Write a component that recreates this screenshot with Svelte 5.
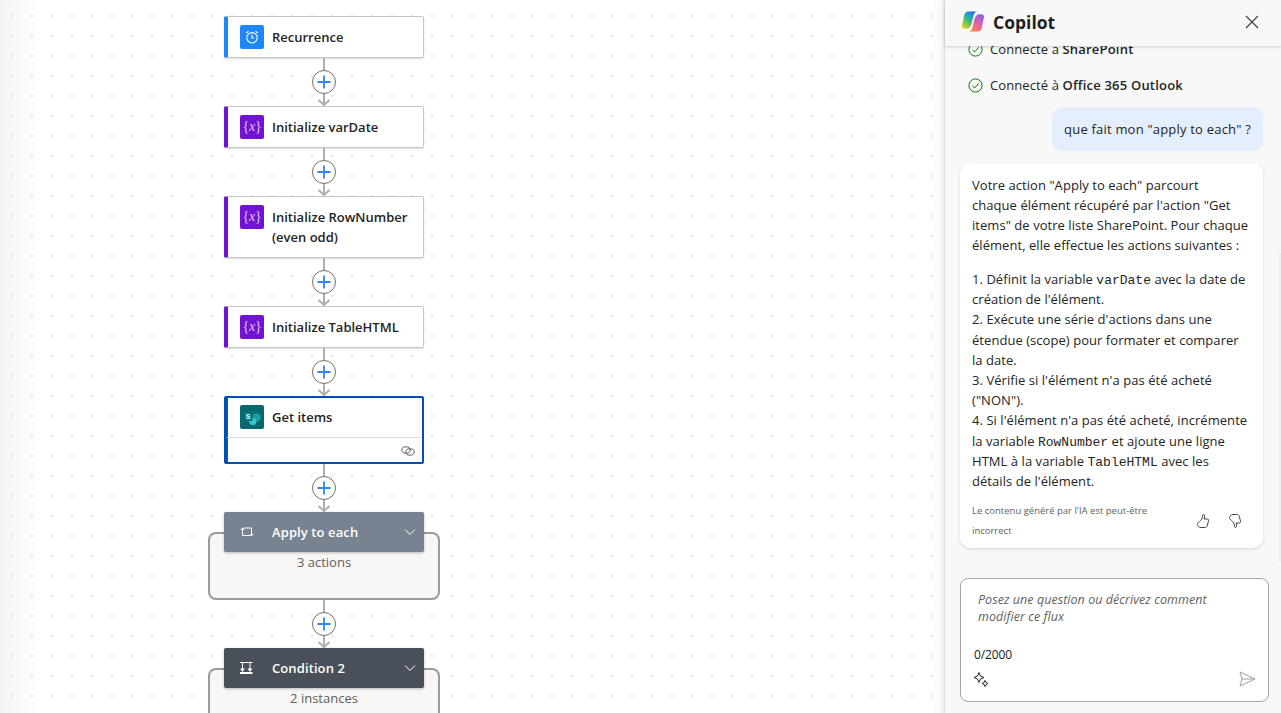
<script>
  const connector = true;
</script>

{#snippet plus()}
  <div class="conn">
    <svg class="conn-line" width="24" height="48" viewBox="0 0 24 48" aria-hidden="true">
      <path d="M12 0V47M6.500 42L12 47L17.500 42" fill="none" stroke="#b1afae" stroke-width="2"/>
    </svg>
    <span class="plus">
      <svg width="24" height="24" viewBox="0 0 24 24" aria-hidden="true">
        <circle cx="12" cy="12" r="11.500" fill="#fff" stroke="#6f6d6b"/>
        <path d="M12 5.500V18.500M5.500 12H18.500" stroke="#2f86f5" stroke-width="1.800"/>
      </svg>
    </span>
  </div>
{/snippet}

{#snippet varIcon()}
  <span class="tile purple"><span class="vx">&#123;<i>x</i>&#125;</span></span>
{/snippet}

<div class="app">
  <main class="canvas">
    <div class="flow">
      <div class="node blue">
        <span class="tile azure">
          <svg width="16" height="16" viewBox="0 0 16 16" fill="none" stroke="#fff" stroke-width="1.100">
            <circle cx="8" cy="8.800" r="5.200"/>
            <path d="M8 5.800V9H10.200M2.200 4.200L4.400 2.200M13.800 4.200L11.600 2.200" />
          </svg>
        </span>
        <span class="label">Recurrence</span>
      </div>
      {@render plus()}
      <div class="node violet">
        {@render varIcon()}
        <span class="label">Initialize varDate</span>
      </div>
      {@render plus()}
      <div class="node violet tall">
        {@render varIcon()}
        <span class="label">Initialize RowNumber<br />(even odd)</span>
      </div>
      {@render plus()}
      <div class="node violet">
        {@render varIcon()}
        <span class="label">Initialize TableHTML</span>
      </div>
      {@render plus()}
      <div class="node selected">
        <div class="head">
          <span class="tile teal">
            <svg width="20" height="20" viewBox="0 0 20 20">
              <circle cx="10.500" cy="6.500" r="5" fill="#036c70"/>
              <circle cx="14.500" cy="10.500" r="4.300" fill="#1a9ba1"/>
              <circle cx="10.800" cy="14.500" r="3.600" fill="#37c6d0"/>
              <rect x="2" y="5.500" width="8.500" height="8.500" rx="1" fill="#03787c"/>
              <text x="6.200" y="12.400" class="s">S</text>
            </svg>
          </span>
          <span class="label">Get items</span>
        </div>
        <div class="foot">
          <svg width="14" height="12" viewBox="0 0 14 12" fill="none" stroke="#605e5c" stroke-width="1">
            <ellipse cx="5" cy="5" rx="4.200" ry="3.200"/>
            <ellipse cx="9" cy="7" rx="4.200" ry="3.200"/>
          </svg>
        </div>
      </div>
      {@render plus()}
      <div class="group">
        <div class="ghead slate">
          <svg width="14" height="14" viewBox="0 0 14 14" fill="none" stroke="#fff" stroke-width="1">
            <path d="M3.500 3H11.500V10M10 10.500H2.500V3.500M1 5L2.500 3L4 5M10 9L11.500 11L13 9" />
          </svg>
          <span class="gtitle">Apply to each</span>
          <svg class="chev" width="12" height="8" viewBox="0 0 12 8" fill="none" stroke="#fff" stroke-width="1"><path d="M1 1.500L6 6.500L11 1.500"/></svg>
        </div>
        <div class="gbox"><span>3 actions</span></div>
      </div>
      {@render plus()}
      <div class="group">
        <div class="ghead dark">
          <svg width="14" height="14" viewBox="0 0 14 14" fill="none" stroke="#fff" stroke-width="1">
            <path d="M0 1.500H12.500M2.500 1.500V8M10 1.500V8" />
            <path d="M0 7.500H5L2.500 11ZM7.500 7.500H12.500L10 11Z" fill="#fff" stroke="none"/>
            <path d="M0 12H12.500" stroke-width="2"/>
          </svg>
          <span class="gtitle">Condition 2</span>
          <svg class="chev" width="12" height="8" viewBox="0 0 12 8" fill="none" stroke="#fff" stroke-width="1"><path d="M1 1.500L6 6.500L11 1.500"/></svg>
        </div>
        <div class="gbox open"><span>2 instances</span></div>
      </div>
    </div>
  </main>

  <aside class="panel">
    <header class="phead">
      <svg class="logo" width="24" height="24" viewBox="0 0 24 24" aria-hidden="true">
        <defs>
          <linearGradient id="cpa" x1="0.1" y1="1" x2="0.8" y2="0">
            <stop offset="0" stop-color="#f5d020"/>
            <stop offset="0.45" stop-color="#3fc06a"/>
            <stop offset="0.8" stop-color="#1f8fe8"/>
            <stop offset="1" stop-color="#1a5fd0"/>
          </linearGradient>
          <linearGradient id="cpb" x1="0.2" y1="1" x2="0.8" y2="0">
            <stop offset="0" stop-color="#f8893c"/>
            <stop offset="0.5" stop-color="#e85fa8"/>
            <stop offset="1" stop-color="#8d62e8"/>
          </linearGradient>
        </defs>
        <path d="M7 1.500H16C14 2 13.200 3 12.700 5L11 12C10.400 15 9.300 18 6.500 18.700H3.500C1.800 18.700 .8 17.500 1 16L3 6C3.600 3 5 1.500 7 1.500Z" fill="url(#cpa)"/>
        <path d="M17 21.500H8C10 21 10.800 20 11.300 18L13 11C13.600 8 14.700 5 17.500 4.300H20.500C22.200 4.300 23.200 5.500 23 7L21 17C20.400 20 19 21.500 17 21.500Z" fill="url(#cpb)"/>
      </svg>
      <h1>Copilot</h1>
      <svg class="close" width="14" height="14" viewBox="0 0 14 14" fill="none" stroke="#424242" stroke-width="1.200"><path d="M1 1L13 13M13 1L1 13"/></svg>
    </header>

    <div class="msgs">
      <p class="conn-msg">
        <svg width="15" height="15" viewBox="0 0 15 15" fill="none" stroke="#107c10" stroke-width="1"><circle cx="7.500" cy="7.500" r="6.600"/><path d="M4.500 7.800L6.700 10L10.700 5.300"/></svg>
        <span>Connecté à <b>SharePoint</b></span>
      </p>
      <p class="conn-msg">
        <svg width="15" height="15" viewBox="0 0 15 15" fill="none" stroke="#107c10" stroke-width="1"><circle cx="7.500" cy="7.500" r="6.600"/><path d="M4.500 7.800L6.700 10L10.700 5.300"/></svg>
        <span>Connecté à <b>Office 365 Outlook</b></span>
      </p>
      <div class="bubble">que fait mon "apply to each" ?</div>
      <article class="card">
        <p>Votre action "Apply to each" parcourt<br />chaque élément récupéré par l'action "Get<br />items" de votre liste SharePoint. Pour chaque<br />élément, elle effectue les actions suivantes :</p>
        <p class="list">1. Définit la variable <code>varDate</code> avec la date de<br />création de l'élément.<br />2. Exécute une série d'actions dans une<br />étendue (scope) pour formater et comparer<br />la date.<br />3. Vérifie si l'élément n'a pas été acheté<br />("NON").<br />4. Si l'élément n'a pas été acheté, incrémente<br />la variable <code>RowNumber</code> et ajoute une ligne<br />HTML à la variable <code>TableHTML</code> avec les<br />détails de l'élément.</p>
        <div class="cfoot">
          <small>Le contenu généré par l'IA est peut-être<br />incorrect</small>
          <svg width="16" height="16" viewBox="0 0 16 16" fill="none" stroke="#424242" stroke-width="1"><path d="M8.500 1.500C9.500 1.500 9.800 2.500 9.500 3.800L9 6H12.300C13.300 6 13.800 6.800 13.500 7.800L12.300 12.600C12 13.800 11 14.500 9.800 14.500H6C4 14.500 2.500 13 2.500 11.500C2.500 10 3.500 9.200 4.500 8.500C6 7.500 7.500 5 7.500 3C7.500 2 7.800 1.500 8.500 1.500Z"/></svg>
          <svg width="16" height="16" viewBox="0 0 16 16" fill="none" stroke="#424242" stroke-width="1"><path d="M8.500 14.500C9.500 14.500 9.800 13.500 9.500 12.200L9 10H12.300C13.300 10 13.800 9.200 13.500 8.200L12.300 3.400C12 2.200 11 1.500 9.800 1.500H6C4 1.500 2.500 3 2.500 4.500C2.500 6 3.500 6.800 4.500 7.500C6 8.500 7.500 11 7.500 13C7.500 14 7.800 14.500 8.500 14.500Z"/></svg>
        </div>
      </article>
    </div>

    <div class="composer">
      <div class="input">
        <p class="ph">Posez une question ou décrivez comment modifier ce flux</p>
        <p class="count">0/2000</p>
        <div class="tools">
          <svg width="16" height="16" viewBox="0 0 16 16" fill="none" stroke="#242424" stroke-width="1"><path d="M6 1.500L7.500 5L11 6.500L7.500 8L6 11.500L4.500 8L1 6.500L4.500 5Z"/><path d="M12 9.500L13 11.500L15 12.500L13 13.500L12 15.500L11 13.500L9 12.500L11 11.500Z"/></svg>
          <svg width="18" height="18" viewBox="0 0 18 18" fill="none" stroke="#a19f9d" stroke-width="1"><path d="M2 2L17 9L2 16L4 9ZM4 9H17"/></svg>
        </div>
      </div>
    </div>
    <span class="thumb"></span>
  </aside>
</div>

<style>
  :global(body) {
    margin: 0;
    font-family: "Open Sans", "Noto Sans", sans-serif;
    color: #242424;
  }
  .app {
    display: flex;
    width: 1281px;
    height: 713px;
    overflow: hidden;
  }
  .canvas {
    flex: 0 0 945px;
    height: 713px;
    overflow: hidden;
    background-color: #fff;
    background-image:
      linear-gradient(90deg, rgba(0,0,0,.045), rgba(0,0,0,0) 44px),
      linear-gradient(270deg, rgba(0,0,0,.04), rgba(0,0,0,0) 14px),
      radial-gradient(circle at 1px 1px, #e4e4e4 1.400px, transparent 1.450px);
    background-size: auto, auto, 20px 20px;
    background-position: 0 0, 0 0, 11px 15px;
  }
  .flow {
    display: flex;
    flex-direction: column;
    align-items: center;
    width: 232px;
    margin-left: 208px;
    padding-top: 16px;
  }
  .node {
    box-sizing: border-box;
    width: 200px;
    min-height: 42px;
    display: flex;
    align-items: center;
    gap: 8px;
    padding-left: 12px;
    background: #fff;
    border: 1px solid #c8c6c4;
    border-left-width: 4px;
    border-radius: 2px;
    box-shadow: 0 1px 2px rgba(0,0,0,.14);
  }
  .blue { border-left-color: #1e88fa; }
  .violet { border-left-color: #7014d1; }
  .tall { min-height: 62px; align-items: flex-start; padding-top: 8px; }
  .tall .label { margin-top: 2px; }
  .tile {
    flex: none;
    width: 24px;
    height: 24px;
    border-radius: 2px;
    display: flex;
    align-items: center;
    justify-content: center;
  }
  .azure { background: #1e88fa; }
  .purple { background: #7014d1; }
  .teal { background: #07696d; }
  .vx {
    color: #dcc6f6;
    font: 14px/1 "Liberation Serif", serif;
    letter-spacing: -.3px;
  }
  .label {
    font-size: 13px;
    line-height: 20px;
    font-weight: 600;
    color: #242424;
  }
  .s {
    font: 700 7px "Liberation Sans", sans-serif;
    fill: #fff;
    text-anchor: middle;
  }
  .selected {
    display: block;
    padding: 0;
    height: 68px;
    border: 2px solid #0050b4;
    border-left: 3px solid #0050b4;
    box-shadow: inset 1px 0 0 #036c70;
  }
  .head {
    display: flex;
    align-items: center;
    gap: 8px;
    height: 38px;
    padding: 0 0 1px 13px;
    border-bottom: 1px solid #dcdcdc;
  }
  .foot {
    display: flex;
    justify-content: flex-end;
    align-items: center;
    height: 25px;
    padding-right: 7px;
  }
  .conn {
    position: relative;
    width: 24px;
    height: 48px;
    flex: none;
  }
  .conn-line { display: block; }
  .plus {
    position: absolute;
    left: 0;
    top: 12px;
    height: 24px;
    display: block;
  }
  .group {
    width: 232px;
    display: flex;
    flex-direction: column;
    align-items: center;
  }
  .ghead {
    position: relative;
    z-index: 1;
    box-sizing: border-box;
    width: 200px;
    height: 40px;
    display: flex;
    align-items: center;
    padding: 0 8px 0 16px;
    border-radius: 2px;
    box-shadow: 0 1px 3px rgba(0,0,0,.25);
  }
  .slate { background: #778391; }
  .dark { background: #495059; }
  .gtitle {
    flex: 1;
    margin-left: 18px;
    color: #fff;
    font-size: 13px;
    font-weight: 600;
    letter-spacing: .1px;
  }
  .chev { margin-right: 0; }
  .gbox {
    box-sizing: border-box;
    width: 232px;
    height: 68px;
    margin-top: -20px;
    padding-top: 16px;
    text-align: center;
    background: #f9f7f5;
    border: 2px solid #9c9a98;
    border-radius: 8px;
  }
  .gbox span {
    font-size: 13px;
    line-height: 18px;
    color: #605e5c;
  }
  .open { height: 90px; }

  .panel {
    position: relative;
    flex: 1;
    height: 713px;
    display: flex;
    flex-direction: column;
    background: #f8f8f8;
    box-shadow: -1px 0 3px rgba(0,0,0,.12);
    min-width: 0;
  }
  .phead {
    position: relative;
    z-index: 2;
    flex: none;
    height: 46px;
    display: flex;
    align-items: center;
    padding: 0 22px 3px 16px;
    background: #f8f8f8;
    box-shadow: 0 1px 3px rgba(0,0,0,.18);
    box-sizing: border-box;
  }
  .logo { flex: none; }
  h1 {
    flex: 1;
    margin: 0 0 0 8px;
    font-size: 17.500px;
    font-weight: 700;
    color: #1f1f1f;
  }
  .msgs {
    flex: 1;
    min-height: 0;
    overflow: hidden;
    display: flex;
    flex-direction: column;
    justify-content: flex-end;
    padding: 0 18px 30px 15px;
  }
  .conn-msg {
    flex: none;
    display: flex;
    align-items: center;
    gap: 7px;
    height: 20px;
    margin: 0 0 16px 8px;
    font-size: 13px;
    letter-spacing: .1px;
  }
  .conn-msg b { font-weight: 600; letter-spacing: .2px; }
  .bubble {
    flex: none;
    align-self: flex-end;
    margin: 0 0 12px;
    padding: 12px;
    height: 20px;
    line-height: 20px;
    background: #e5eefd;
    border-radius: 10px;
    font-size: 13px;
    letter-spacing: .2px;
  }
  .conn-msg + .bubble { margin-top: -4px; }
  .card {
    flex: none;
    box-sizing: border-box;
    width: 303px;
    height: 385px;
    padding: 12px;
    background: #fff;
    border-radius: 10px;
    box-shadow: 0 1px 3px rgba(0,0,0,.14);
    font-size: 13px;
    line-height: 20px;
    letter-spacing: .05px;
  }
  .card p { margin: 0; }
  .card .list { margin-top: 14px; line-height: 20.200px; }
  code {
    font: 13px "Liberation Mono", monospace;
    letter-spacing: 0;
  }
  .cfoot {
    display: flex;
    align-items: center;
    gap: 16px;
    margin-top: 10px;
    padding-right: 8px;
    color: #616161;
  }
  small {
    flex: 1;
    font-size: 9.500px;
    line-height: 20px;
    letter-spacing: 0;
  }
  .composer {
    flex: none;
    padding: 0 12px 11px 15px;
  }
  .input {
    box-sizing: border-box;
    height: 124px;
    padding: 12px 14px 0 13px;
    background: #fff;
    border: 1px solid #a3a3a3;
    border-radius: 8px;
    display: flex;
    flex-direction: column;
  }
  .ph {
    margin: 0 0 0 4px;
    width: 250px;
    font-size: 12.500px;
    line-height: 17px;
    font-style: italic;
    letter-spacing: .05px;
    color: #616161;
  }
  .count {
    margin: 22px 0 0 0;
    font-size: 12px;
    line-height: 16px;
    letter-spacing: -.1px;
    color: #1a1a1a;
  }
  .tools {
    display: flex;
    justify-content: space-between;
    align-items: center;
    margin: 7px -2px 0 -1px;
  }
  .thumb {
    position: absolute;
    right: 0;
    top: 253px;
    width: 3px;
    height: 309px;
    background: #f0f0f0;
  }
</style>
